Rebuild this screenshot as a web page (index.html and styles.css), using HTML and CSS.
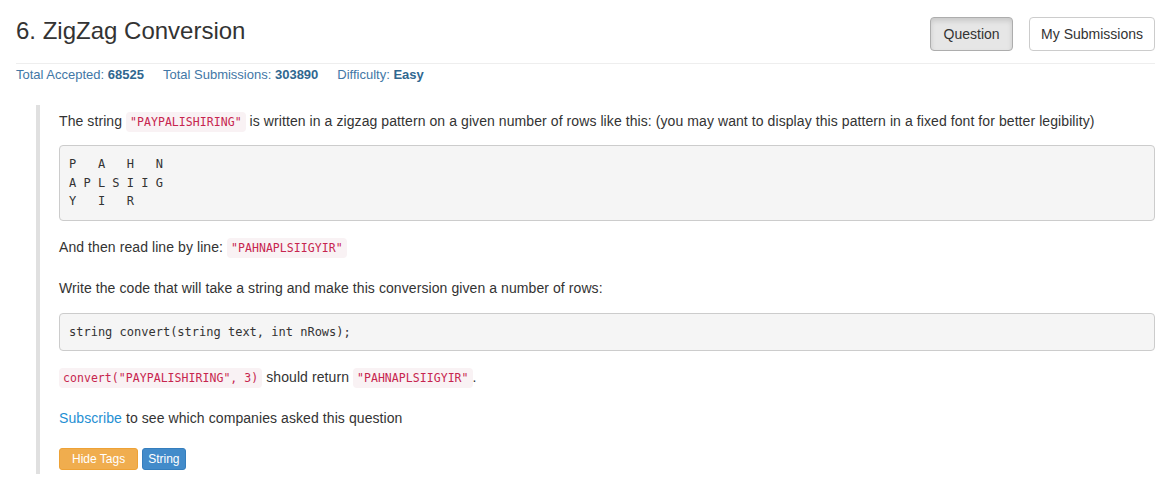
FILE: index.html
```html
<!DOCTYPE html>
<html>
<head>
<meta charset="utf-8">
<title>6. ZigZag Conversion</title>
<link rel="stylesheet" href="styles.css">
</head>
<body>
<div class="page">
  <div class="header">
    <h3 class="title">6. ZigZag Conversion</h3>
    <div class="actions">
      <a class="btn btn-active">Question</a>
      <a class="btn btn-default">My Submissions</a>
    </div>
  </div>
  <div class="stats">
    <span>Total Accepted: <b>68525</b></span>
    <span>Total Submissions: <b>303890</b></span>
    <span>Difficulty: <b>Easy</b></span>
  </div>
  <div class="question">
    <p class="before-pre">The string <code>"PAYPALISHIRING"</code> is written in a zigzag pattern on a given number of rows like this: (you may want to display this pattern in a fixed font for better legibility)</p>
<pre>P   A   H   N
A P L S I I G
Y   I   R</pre>
    <p>And then read line by line: <code>"PAHNAPLSIIGYIR"</code></p>
    <p class="before-pre second">Write the code that will take a string and make this conversion given a number of rows:</p>
<pre>string convert(string text, int nRows);</pre>
    <p><code>convert("PAYPALISHIRING", 3)</code> should return <code>"PAHNAPLSIIGYIR"</code>.</p>
    <p class="before-tags"><a class="link">Subscribe</a> to see which companies asked this question</p>
    <div class="tags">
      <span class="tag tag-warning">Hide Tags</span>
      <span class="tag tag-primary">String</span>
    </div>
  </div>
</div>
</body>
</html>
```
FILE: styles.css
```css
html, body {
  margin: 0;
  padding: 0;
  background: #fff;
}
body {
  font-family: "Liberation Sans", Arial, sans-serif;
  font-size: 14px;
  line-height: 20px;
  color: #333;
}
.page {
  padding: 17px 15px 0 16px;
}
.header {
  display: flex;
  justify-content: space-between;
  align-items: flex-start;
  padding-bottom: 12px;
  border-bottom: 1px solid #eee;
}
.title {
  margin: 0;
  font-size: 24px;
  line-height: 28px;
  font-weight: normal;
  color: #333;
}
.actions {
  display: flex;
  gap: 16px;
}
.btn {
  display: block;
  font-size: 14px;
  line-height: 20px;
  color: #333;
  background: #fff;
  border: 1px solid #ccc;
  border-radius: 4px;
  cursor: pointer;
}
.btn-active {
  padding: 6px 12.5px;
  background: #e6e6e6;
  border-color: #adadad;
  box-shadow: inset 0 3px 5px rgba(0, 0, 0, 0.125);
}
.btn-default {
  padding: 6px 11px;
}
.stats {
  display: flex;
  gap: 19px;
  margin-top: 2px;
  font-size: 13px;
  line-height: 18px;
  color: #4277a6;
}
.stats b {
  color: #2f6790;
}
.question {
  margin: 21px 0 0 20px;
  padding: 6px 0 4px 19px;
  border-left: 4px solid #e0e0e0;
}
.question p {
  margin: 0 0 21px;
  letter-spacing: 0.08px;
}
.question p.before-pre {
  margin-bottom: 14px;
}
.question p.before-pre.second {
  margin-bottom: 15px;
}
.question p.before-tags {
  margin-bottom: 20px;
}
code {
  font-family: "DejaVu Sans Mono", "Liberation Mono", monospace;
  font-size: 11.5px;
  line-height: 1;
  letter-spacing: 0.05px;
  padding: 3px 4px;
  color: #c7254e;
  background: #f9f2f4;
  border-radius: 4px;
}
pre {
  margin: 0 0 16px;
  padding: 9px;
  font-family: "DejaVu Sans Mono", "Liberation Mono", monospace;
  font-size: 12px;
  line-height: 18.5px;
  color: #333;
  background: #f5f5f5;
  border: 1px solid #ccc;
  border-radius: 4px;
  white-space: pre;
}
.link {
  color: #1f8fd3;
  text-decoration: none;
  cursor: pointer;
}
.tags {
  display: flex;
  gap: 4px;
}
.tag {
  display: inline-block;
  font-size: 12px;
  line-height: 20px;
  color: #fff;
  border: 1px solid transparent;
  border-radius: 3px;
}
.tag-warning {
  padding: 0 12px;
  background: #f0ad4e;
  border-color: #eea236;
}
.tag-primary {
  padding: 0 5px;
  background: #428bca;
  border-color: #357ebd;
}
```
